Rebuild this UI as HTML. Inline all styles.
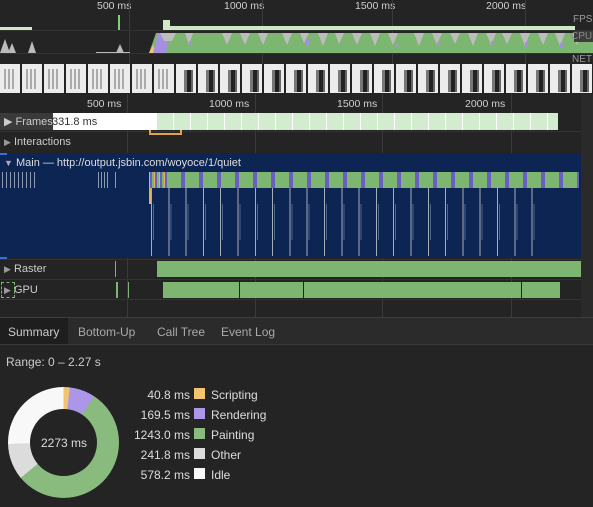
<!DOCTYPE html>
<html><head><meta charset="utf-8"><style>
*{margin:0;padding:0;box-sizing:border-box}
body{width:593px;height:507px;background:#242424;font-family:"Liberation Sans",sans-serif;color:#d6d6d6;font-size:11px;position:relative;overflow:hidden}
.a{position:absolute}
.lbl{font-size:10.5px;color:#cfcfcf}
.g{background:#7cb671}
</style></head><body>
<!-- top ruler -->
<div class="a lbl" style="left:97px;top:0">500 ms</div>
<div class="a lbl" style="left:224px;top:0">1000 ms</div>
<div class="a lbl" style="left:355px;top:0">1500 ms</div>
<div class="a lbl" style="left:486px;top:0">2000 ms</div>
<div class="a" style="left:129px;top:0;width:1px;height:93px;background:#3a3a3a"></div>
<div class="a" style="left:262px;top:0;width:1px;height:93px;background:#3a3a3a"></div>
<div class="a" style="left:392px;top:0;width:1px;height:93px;background:#3a3a3a"></div>
<div class="a" style="left:525px;top:0;width:1px;height:93px;background:#3a3a3a"></div>
<div class="a" style="left:0;top:30px;width:593px;height:1px;background:#333"></div>
<div class="a" style="left:0;top:53px;width:593px;height:1px;background:#333"></div>
<!-- FPS -->
<div class="a" style="left:0;top:27px;width:32px;height:3px;background:#cfe8c7"></div>
<div class="a" style="left:118px;top:15px;width:2px;height:15px;background:#7fcf77"></div>
<div class="a" style="left:163px;top:20px;width:7px;height:10px;background:#cfe8c7"></div>
<div class="a" style="left:163px;top:26px;width:412px;height:4px;background:#cfe8c7"></div>
<div class="a" style="left:573px;top:14px;font-size:10px;color:#9a9a9a">FPS</div>
<!-- CPU -->
<svg class="a" style="left:0;top:31px" width="593" height="22">
<g fill="#bbb"><polygon points="0,22 5,8 10,22"/><polygon points="8,22 12,12 16,22"/><polygon points="28,22 32,10 36,22"/><polygon points="116,22 120,13 124,22"/><polygon points="96,21 130,21 130,22 96,22"/></g>
<polygon points="149,22 156,2 593,2 593,22" fill="#7cb671"/>
<polygon points="149,22 153,14 156,22" fill="#f2c46f"/>
<polygon points="153,22 158,2 170,2 166,22" fill="#a48fe0"/>
<polygon points="160,2 176,2 172,10 164,10" fill="#bdbdbd"/>
<g fill="#bdbdbd">
<polygon points="185,2 193,2 189,14"/><polygon points="222,2 232,2 227,14"/><polygon points="240,2 250,2 245,14"/><polygon points="258,2 268,2 263,14"/><polygon points="282,2 292,2 287,14"/><polygon points="300,2 309,2 304,12"/><polygon points="318,2 328,2 323,15"/><polygon points="335,2 344,2 339,13"/><polygon points="352,2 362,2 357,14"/><polygon points="370,2 380,2 375,15"/><polygon points="388,2 398,2 393,14"/><polygon points="414,2 424,2 419,15"/><polygon points="432,2 442,2 437,14"/><polygon points="450,2 460,2 455,13"/><polygon points="468,2 478,2 473,15"/><polygon points="486,2 496,2 491,14"/><polygon points="502,2 512,2 507,13"/><polygon points="520,2 530,2 525,15"/><polygon points="538,2 548,2 543,14"/><polygon points="555,2 565,2 560,15"/><polygon points="572,2 582,2 577,14"/>
</g>
<g fill="#a48fe0"><rect x="189" y="10" width="3" height="5"/><rect x="306" y="9" width="3" height="5"/><rect x="395" y="12" width="3" height="5"/><rect x="437" y="11" width="3" height="4"/><rect x="491" y="10" width="3" height="5"/><rect x="525" y="11" width="3" height="5"/><rect x="560" y="12" width="3" height="5"/></g>
<rect x="574" y="0" width="19" height="11" fill="#3c3c3c"/>
</svg>
<div class="a" style="left:571px;top:31px;font-size:10px;color:#8a8a8a">CPU</div>
<div class="a" style="left:572px;top:54px;font-size:10px;color:#9a9a9a">NET</div>
<!-- filmstrip -->
<div class="a" style="left:0;top:64px;width:593px;height:30px;background:repeating-linear-gradient(90deg,#ececec 0 20px,#242424 20px 22px)"></div>
<div class="a" style="left:0;top:69px;width:176px;height:20px;background:repeating-linear-gradient(90deg,transparent 0 4px,#9a9a9a 4px 6px,transparent 6px 8px,#9a9a9a 8px 10px,transparent 10px 12px,#9a9a9a 12px 14px,transparent 14px 22px);opacity:.8"></div>
<div class="a" style="left:176px;top:64px;width:417px;height:30px;background:repeating-linear-gradient(90deg,transparent 0 8px,#777 8px 11px,#222 11px 15px,#666 15px 17px,transparent 17px 22px);-webkit-mask:linear-gradient(#0000 0 6px,#000 6px 28px,#0000 28px)"></div>
<div class="a" style="left:0;top:93px;width:593px;height:1px;background:#222"></div>
<!-- second ruler -->
<div class="a lbl" style="left:87px;top:98px">500 ms</div>
<div class="a lbl" style="left:209px;top:98px">1000 ms</div>
<div class="a lbl" style="left:337px;top:98px">1500 ms</div>
<div class="a lbl" style="left:465px;top:98px">2000 ms</div>
<div class="a" style="left:127px;top:94px;width:1px;height:225px;background:#3a3a3a"></div>
<div class="a" style="left:255px;top:94px;width:1px;height:225px;background:#3a3a3a"></div>
<div class="a" style="left:382px;top:94px;width:1px;height:225px;background:#3a3a3a"></div>
<div class="a" style="left:511px;top:94px;width:1px;height:225px;background:#3a3a3a"></div>
<!-- frames -->
<div class="a" style="left:52px;top:113px;width:105px;height:17px;background:#fff"></div>
<div class="a" style="left:157px;top:113px;width:401px;height:17px;background:repeating-linear-gradient(90deg,#d3ecd0 0 16px,#fff 16px 17px)"></div>
<div class="a" style="left:0;top:113px;width:53px;height:17px;background:#3a3a3a"></div>
<div class="a" style="left:4px;top:115px;font-size:11px;color:#ccc">▶ Frames</div>
<div class="a" style="left:52px;top:116px;font-size:11px;color:#333">331.8 ms</div>
<div class="a" style="left:0;top:131px;width:581px;height:1px;background:#333"></div>
<div class="a" style="left:4px;top:136px;font-size:11px;color:#ccc"><span style="font-size:9px;color:#999">▶</span> Interactions</div>
<div class="a" style="left:149px;top:130px;width:33px;height:5px;border:2px solid #e3a04d;border-top:none"></div>
<!-- main -->
<div class="a" style="left:0;top:153px;width:581px;height:105px;background:#0c2553"></div>
<div class="a" style="left:0;top:153px;width:7px;height:2px;background:#3b6fd8"></div>
<div class="a" style="left:0;top:257px;width:7px;height:2px;background:#3b6fd8"></div>
<div class="a" style="left:4px;top:157px;font-size:11px;color:#ddd"><span style="font-size:9px;color:#aaa">▼</span> Main — http://output.jsbin.com/woyoce/1/quiet</div>
<div class="a" style="left:2px;top:172px;width:33px;height:16px;background:repeating-linear-gradient(90deg,#8c9ab0 0 1px,transparent 1px 4px)"></div>
<div class="a" style="left:98px;top:172px;width:10px;height:16px;background:repeating-linear-gradient(90deg,#8c9ab0 0 1px,transparent 1px 3px)"></div>
<div class="a" style="left:115px;top:172px;width:1px;height:16px;background:#8c9ab0"></div>
<div class="a" style="left:149px;top:172px;width:430px;height:16px;background:repeating-linear-gradient(90deg,#7cb671 0 14px,#6a5fc0 14px 18px)"></div>
<div class="a" style="left:149px;top:172px;width:20px;height:16px;background:repeating-linear-gradient(90deg,#e0b060 0 1px,#6a5fc0 1px 3px,#7cb671 3px 5px)"></div>
<div class="a" style="left:149px;top:188px;width:2px;height:16px;background:#e0b060"></div>
<div class="a" style="left:151px;top:188px;width:390px;height:68px;background:repeating-linear-gradient(90deg,#a8aeb6 0 1px,transparent 1px 17.3px)"></div>
<div class="a" style="left:151px;top:204px;width:400px;height:36px;background:repeating-linear-gradient(90deg,transparent 0 2px,#7fa6c8 2px 3px,transparent 3px 17.3px);opacity:.5"></div>
<div class="a" style="left:581px;top:94px;width:12px;height:225px;background:#2a2a2a"></div>
<!-- raster -->
<div class="a" style="left:0;top:259px;width:581px;height:1px;background:#333"></div>
<div class="a" style="left:4px;top:263px;font-size:11px;color:#ccc"><span style="font-size:9px;color:#999">▶</span> Raster</div>
<div class="a" style="left:115px;top:261px;width:1px;height:16px;background:#7cb671"></div>
<div class="a g" style="left:157px;top:261px;width:424px;height:16px"></div>
<div class="a" style="left:0;top:279px;width:581px;height:1px;background:#333"></div>
<!-- gpu -->
<div class="a" style="left:1px;top:282px;width:14px;height:16px;border:1px dashed #7cb671"></div>
<div class="a" style="left:4px;top:284px;font-size:11px;color:#ccc"><span style="font-size:9px;color:#999">▶</span> GPU</div>
<div class="a" style="left:116px;top:282px;width:2px;height:16px;background:#7cb671"></div>
<div class="a" style="left:128px;top:282px;width:1px;height:16px;background:#7cb671"></div>
<div class="a g" style="left:163px;top:282px;width:397px;height:16px"></div>
<div class="a" style="left:239px;top:282px;width:1px;height:16px;background:#222"></div>
<div class="a" style="left:303px;top:282px;width:1px;height:16px;background:#222"></div>
<div class="a" style="left:521px;top:282px;width:1px;height:16px;background:#222"></div>
<div class="a" style="left:0;top:299px;width:581px;height:1px;background:#333"></div>
<!-- tabs -->
<div class="a" style="left:0;top:317px;width:593px;height:1px;background:#3d3d3d"></div>
<div class="a" style="left:0;top:318px;width:593px;height:26px;background:#2b2b2b"></div>
<div class="a" style="left:0;top:318px;width:68px;height:26px;background:#1e1e1e"></div>
<div class="a" style="left:0;top:344px;width:593px;height:1px;background:#3a3a3a"></div>
<div class="a" style="left:8px;top:325px;font-size:12px;color:#ccc">Summary</div>
<div class="a" style="left:78px;top:325px;font-size:12px;color:#aaa">Bottom-Up</div>
<div class="a" style="left:157px;top:325px;font-size:12px;color:#aaa">Call Tree</div>
<div class="a" style="left:221px;top:325px;font-size:12px;color:#aaa">Event Log</div>
<div class="a" style="left:6px;top:355px;font-size:12px;color:#ccc">Range: 0 – 2.27 s</div>
<!-- donut -->
<div class="a" style="left:8px;top:387px;width:111px;height:111px;border-radius:50%;background:conic-gradient(#f2c46f 0 1.8%,#ac96e8 1.8% 9.3%,#88bb7d 9.3% 64%,#dcdcdc 64% 74.6%,#f8f8f8 74.6% 100%)"></div>
<div class="a" style="left:30px;top:409px;width:67px;height:67px;border-radius:50%;background:#242424"></div>
<div class="a" style="left:41px;top:436px;font-size:12px;color:#ddd">2273 ms</div>
<div class="a" style="left:120px;top:385px;width:70px;text-align:right;font-size:12px;line-height:20px;color:#ddd">40.8 ms<br>169.5 ms<br>1243.0 ms<br>241.8 ms<br>578.2 ms</div>
<div class="a" style="left:194px;top:388px;width:11px;height:11px;background:#f2c46f"></div>
<div class="a" style="left:194px;top:408px;width:11px;height:11px;background:#ac96e8"></div>
<div class="a" style="left:194px;top:428px;width:11px;height:11px;background:#88bb7d"></div>
<div class="a" style="left:194px;top:448px;width:11px;height:11px;background:#dcdcdc"></div>
<div class="a" style="left:194px;top:468px;width:11px;height:11px;background:#f8f8f8"></div>
<div class="a" style="left:211px;top:385px;font-size:12px;line-height:20px;color:#ddd">Scripting<br>Rendering<br>Painting<br>Other<br>Idle</div>
</body></html>
